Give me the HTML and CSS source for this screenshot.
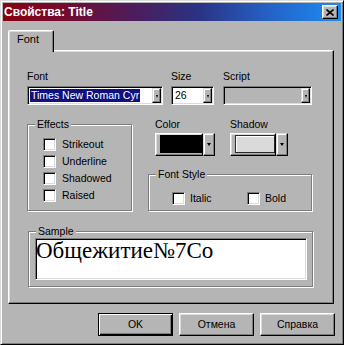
FILE: index.html
```html
<!DOCTYPE html>
<html>
<head>
<meta charset="utf-8">
<link rel="stylesheet" href="styles.css">
</head>
<body>
<div class="window">
  <div class="titlebar">
    <span class="title">Свойства: Title</span>
    <span class="close"><svg width="8" height="7" viewBox="0 0 8 7"><path d="M0.5 0.5 L7.5 6.5 M7.5 0.5 L0.5 6.5" stroke="#000" stroke-width="1.6" fill="none"/></svg></span>
  </div>
  <div class="client">
    <div class="tabs"><div class="tab">Font</div></div>
    <div class="panel">
      <div class="row1">
        <div class="f-font">
          <div class="lbl">Font</div>
          <div class="combo"><div class="combo-text"><span class="sel">Times New Roman Cyr</span></div><div class="combo-btn"><span class="arr-s"></span></div></div>
        </div>
        <div class="f-size">
          <div class="lbl">Size</div>
          <div class="combo"><div class="combo-text"><span class="val">26</span></div><div class="combo-btn"><span class="arr-s"></span></div></div>
        </div>
        <div class="f-script">
          <div class="lbl">Script</div>
          <div class="combo disabled"><div class="combo-text"></div><div class="combo-btn"><span class="arr-s"></span></div></div>
        </div>
      </div>
      <div class="row2">
        <div class="group effects">
          <div class="legend">Effects</div>
          <div class="checks">
            <div class="check"><span class="box"></span>Strikeout</div>
            <div class="check"><span class="box"></span>Underline</div>
            <div class="check"><span class="box"></span>Shadowed</div>
            <div class="check"><span class="box"></span>Raised</div>
          </div>
        </div>
        <div class="rightcol">
          <div class="colors">
            <div class="f-color">
              <div class="lbl lbl-c">Color</div>
              <div class="cpick"><div class="cface"><div class="swatch sw-black"></div></div><div class="cbtn"><span class="arr"></span></div></div>
            </div>
            <div class="f-shadow">
              <div class="lbl lbl-c">Shadow</div>
              <div class="cpick"><div class="cface"><div class="swatch sw-light"></div></div><div class="cbtn"><span class="arr"></span></div></div>
            </div>
          </div>
          <div class="group fstyle">
            <div class="legend">Font Style</div>
            <div class="styles">
              <div class="check italic"><span class="box"></span>Italic</div>
              <div class="check"><span class="box"></span>Bold</div>
            </div>
          </div>
        </div>
      </div>
      <div class="group sample">
        <div class="legend">Sample</div>
        <div class="sample-box">Общежитие№7Со</div>
      </div>
    </div>
    <div class="buttons">
      <button class="btn default">OK</button>
      <button class="btn">Отмена</button>
      <button class="btn">Справка</button>
    </div>
  </div>
</div>
</body>
</html>
```
FILE: styles.css
```css
html, body {
  margin: 0;
  padding: 0;
  background: #b5b5b5;
}
body {
  font: 10.5px/13px "Liberation Sans", Arial, sans-serif;
  color: #000;
}
.window {
  width: 344px;
  height: 345px;
  box-sizing: border-box;
  border: 1px solid;
  border-color: #dcdcdc #000 #000 #dcdcdc;
  box-shadow: inset 1px 1px #fff, inset -1px -1px #7d7d7d;
  padding: 2px;
  display: flex;
  flex-direction: column;
  background: #b5b5b5;
}
.titlebar {
  height: 18px;
  flex: none;
  display: flex;
  align-items: center;
  justify-content: space-between;
  padding: 0 3px 0 1px;
  background: linear-gradient(90deg, #8a0010 0%, #740a30 18%, #4a1e5e 40%, #2a3384 58%, #2660c4 78%, #1a8cf6 100%);
}
.title {
  color: #fff;
  font-weight: bold;
  font-size: 12px;
  line-height: 18px;
}
.close {
  width: 16px;
  height: 14px;
  box-sizing: border-box;
  background: #b5b5b5;
  border: 1px solid;
  border-color: #fff #000 #000 #fff;
  box-shadow: inset -1px -1px #7d7d7d, inset 1px 1px #dcdcdc;
  display: flex;
  align-items: center;
  justify-content: center;
}
.close svg { display: block; }
.client {
  flex: 1;
  padding: 9px 6px 0 5px;
  display: flex;
  flex-direction: column;
}
.tabs {
  display: flex;
  margin-bottom: -2px;
  position: relative;
  z-index: 1;
}
.tab {
  width: 46px;
  height: 22px;
  box-sizing: border-box;
  padding: 2px 0 0 8px;
  border: 1px solid;
  border-bottom: none;
  border-color: #fff #000 transparent #fff;
  border-radius: 2px 2px 0 0;
  background: #b5b5b5;
  box-shadow: inset -1px 0 #7d7d7d, inset 1px 1px #dcdcdc;
  font-size: 11px;
}
.panel {
  width: 326px;
  height: 254px;
  box-sizing: border-box;
  border: 1px solid;
  border-color: #fff #000 #000 #fff;
  box-shadow: inset -1px -1px #7d7d7d, inset 1px 1px #dcdcdc;
  padding: 19px 0 0 18px;
}
.row1 { display: flex; }
.f-font { width: 136px; margin-right: 8px; }
.f-size { width: 43px; margin-right: 9px; }
.f-script { width: 89px; }
.lbl { height: 13px; margin-bottom: 3px; white-space: nowrap; }
.lbl-c { margin-bottom: 2px; }
.combo {
  display: flex;
  height: 19px;
  box-sizing: border-box;
  border: 1px solid;
  border-color: #7d7d7d #fff #fff #7d7d7d;
  box-shadow: inset 1px 1px #000, inset -1px -1px #dcdcdc;
  padding: 1px;
  background: #fff;
}
.combo.disabled { background: #b5b5b5; }
.combo-text {
  flex: 1;
  display: flex;
  align-items: center;
  padding-left: 1px;
  overflow: hidden;
  white-space: nowrap;
}
.sel {
  background: #10107e;
  color: #fff;
  padding: 0 1px;
}
.val { padding-left: 1px; }
.combo-btn, .cbtn {
  box-sizing: border-box;
  background: #b5b5b5;
  border: 1px solid;
  border-color: #dcdcdc #000 #000 #dcdcdc;
  box-shadow: inset -1px -1px #7d7d7d, inset 1px 1px #fff;
  display: flex;
  align-items: center;
  justify-content: center;
}
.combo-btn { width: 9px; }
.arr-s {
  width: 0;
  height: 0;
  border-left: 1.5px solid transparent;
  border-right: 1.5px solid transparent;
  border-top: 3px solid #000;
  margin-top: 2px;
}
.arr {
  width: 0;
  height: 0;
  border-left: 2.5px solid transparent;
  border-right: 2.5px solid transparent;
  border-top: 3px solid #000;
}
.row2 {
  display: flex;
  margin-top: 19px;
}
.group {
  border: 1px solid #7d7d7d;
  box-shadow: inset 1px 1px #fff, 1px 1px #fff;
}
.legend {
  width: fit-content;
  margin: -7px 0 0 7px;
  padding: 0 2px;
  background: #b5b5b5;
  white-space: nowrap;
}
.effects {
  width: 105px;
  box-sizing: border-box;
  padding-bottom: 6px;
}
.checks {
  margin-top: 5px;
  padding-left: 15px;
}
.check {
  display: flex;
  align-items: center;
  height: 17px;
  gap: 6px;
}
.box {
  width: 13px;
  height: 13px;
  flex: none;
  box-sizing: border-box;
  background: #fff;
  border: 1px solid;
  border-color: #7d7d7d #fff #fff #7d7d7d;
  box-shadow: inset 1px 1px #000, inset -1px -1px #dcdcdc;
}
.rightcol {
  width: 164px;
  margin-left: 16px;
  display: flex;
  flex-direction: column;
}
.colors {
  display: flex;
  margin: -6px 0 0 7px;
}
.f-color { width: 60px; margin-right: 15px; }
.f-shadow { width: 58px; }
.cpick {
  display: flex;
  height: 23px;
}
.cface {
  flex: 1;
  box-sizing: border-box;
  background: #b5b5b5;
  border: 1px solid;
  border-color: #fff #000 #000 #fff;
  box-shadow: inset -1px -1px #7d7d7d, inset 1px 1px #dcdcdc;
  padding: 1px 0 2px 4px;
  display: flex;
}
.swatch {
  flex: 1;
  box-sizing: border-box;
}
.sw-black { background: #000; }
.sw-light {
  background: #dadada;
  border: 1px solid #2a2a2a;
  box-shadow: inset 1px 1px #fff;
}
.cbtn { width: 12px; }
.fstyle {
  flex: 1;
  margin-top: 18px;
}
.styles {
  display: flex;
  margin-top: 9px;
  padding-left: 23px;
}
.styles .check { gap: 5px; }
.check.italic { width: 75px; }
.sample {
  width: 285px;
  box-sizing: border-box;
  margin: 20px 0 0 1px;
  padding-bottom: 6px;
}
.sample-box {
  margin: 0 5px 0 6px;
  height: 42px;
  box-sizing: border-box;
  background: #fff;
  border: 1px solid;
  border-color: #7d7d7d #fff #fff #7d7d7d;
  box-shadow: inset 1px 1px #000, inset -1px -1px #dcdcdc;
  padding: 1px 0 0 0;
  font: 23px/22px "Liberation Serif", "Times New Roman", serif;
  white-space: nowrap;
  overflow: hidden;
}
.buttons {
  display: flex;
  justify-content: flex-end;
  gap: 6px;
  margin-top: 9px;
}
.btn {
  width: 75px;
  height: 23px;
  box-sizing: border-box;
  font: 10.5px/13px "Liberation Sans", Arial, sans-serif;
  color: #000;
  background: #b5b5b5;
  border: 1px solid;
  border-color: #fff #000 #000 #fff;
  box-shadow: inset -1px -1px #7d7d7d, inset 1px 1px #dcdcdc;
  padding: 0;
  margin: 0;
}
.btn.default {
  border-color: #000;
  box-shadow: inset 1px 1px #fff, inset -1px -1px #000, inset -2px -2px #7d7d7d;
}
```
